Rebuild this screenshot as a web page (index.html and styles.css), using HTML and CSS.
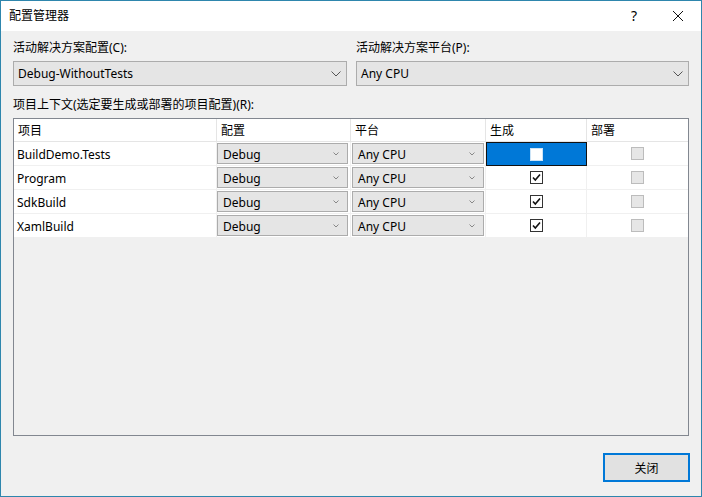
FILE: index.html
```html
<!DOCTYPE html>
<html lang="zh-CN">
<head>
<meta charset="utf-8">
<title>配置管理器</title>
<link rel="stylesheet" href="styles.css">
</head>
<body>
<div class="window">
  <div class="titlebar">
    <span class="title">配置管理器</span>
    <div class="tb-buttons">
      <span class="tb-help">?</span>
      <span class="tb-close"><svg width="12" height="12" viewBox="0 0 12 12"><path d="M1 1 L11 11 M11 1 L1 11" stroke="#111" stroke-width="1" fill="none"/></svg></span>
    </div>
  </div>
  <div class="content">
    <div class="top-fields">
      <div class="field">
        <div class="label">活动解决方案配置(C):</div>
        <div class="combo combo-big"><span>Debug-WithoutTests</span><svg class="chev" width="10" height="6" viewBox="0 0 10 6"><path d="M0.5 0.5 L5 5 L9.5 0.5" stroke="#555" stroke-width="1" fill="none"/></svg></div>
      </div>
      <div class="field">
        <div class="label">活动解决方案平台(P):</div>
        <div class="combo combo-big"><span>Any CPU</span><svg class="chev" width="10" height="6" viewBox="0 0 10 6"><path d="M0.5 0.5 L5 5 L9.5 0.5" stroke="#555" stroke-width="1" fill="none"/></svg></div>
      </div>
    </div>
    <div class="label ctx-label">项目上下文(选定要生成或部署的项目配置)(R):</div>
    <div class="grid-box">
      <div class="grid">
        <div class="hcell">项目</div>
        <div class="hcell">配置</div>
        <div class="hcell">平台</div>
        <div class="hcell">生成</div>
        <div class="hcell">部署</div>

        <div class="cell name">BuildDemo.Tests</div>
        <div class="cell cfg"><div class="combo combo-sm"><span>Debug</span><svg class="chev-sm" width="6" height="4" viewBox="0 0 6 4"><path d="M0.5 0.5 L3 3 L5.5 0.5" stroke="#888" stroke-width="1" fill="none"/></svg></div></div>
        <div class="cell plat"><div class="combo combo-sm"><span>Any CPU</span><svg class="chev-sm" width="6" height="4" viewBox="0 0 6 4"><path d="M0.5 0.5 L3 3 L5.5 0.5" stroke="#888" stroke-width="1" fill="none"/></svg></div></div>
        <div class="cell chk selected"><span class="box box-sel"></span></div>
        <div class="cell chk"><span class="box box-dis"></span></div>

        <div class="cell name">Program</div>
        <div class="cell cfg"><div class="combo combo-sm"><span>Debug</span><svg class="chev-sm" width="6" height="4" viewBox="0 0 6 4"><path d="M0.5 0.5 L3 3 L5.5 0.5" stroke="#888" stroke-width="1" fill="none"/></svg></div></div>
        <div class="cell plat"><div class="combo combo-sm"><span>Any CPU</span><svg class="chev-sm" width="6" height="4" viewBox="0 0 6 4"><path d="M0.5 0.5 L3 3 L5.5 0.5" stroke="#888" stroke-width="1" fill="none"/></svg></div></div>
        <div class="cell chk"><span class="box"><svg width="11" height="11" viewBox="0 0 11 11"><path d="M2 5.5 L4.3 8 L9 2.5" stroke="#111" stroke-width="1.6" fill="none"/></svg></span></div>
        <div class="cell chk"><span class="box box-dis"></span></div>

        <div class="cell name">SdkBuild</div>
        <div class="cell cfg"><div class="combo combo-sm"><span>Debug</span><svg class="chev-sm" width="6" height="4" viewBox="0 0 6 4"><path d="M0.5 0.5 L3 3 L5.5 0.5" stroke="#888" stroke-width="1" fill="none"/></svg></div></div>
        <div class="cell plat"><div class="combo combo-sm"><span>Any CPU</span><svg class="chev-sm" width="6" height="4" viewBox="0 0 6 4"><path d="M0.5 0.5 L3 3 L5.5 0.5" stroke="#888" stroke-width="1" fill="none"/></svg></div></div>
        <div class="cell chk"><span class="box"><svg width="11" height="11" viewBox="0 0 11 11"><path d="M2 5.5 L4.3 8 L9 2.5" stroke="#111" stroke-width="1.6" fill="none"/></svg></span></div>
        <div class="cell chk"><span class="box box-dis"></span></div>

        <div class="cell name">XamlBuild</div>
        <div class="cell cfg"><div class="combo combo-sm"><span>Debug</span><svg class="chev-sm" width="6" height="4" viewBox="0 0 6 4"><path d="M0.5 0.5 L3 3 L5.5 0.5" stroke="#888" stroke-width="1" fill="none"/></svg></div></div>
        <div class="cell plat"><div class="combo combo-sm"><span>Any CPU</span><svg class="chev-sm" width="6" height="4" viewBox="0 0 6 4"><path d="M0.5 0.5 L3 3 L5.5 0.5" stroke="#888" stroke-width="1" fill="none"/></svg></div></div>
        <div class="cell chk"><span class="box"><svg width="11" height="11" viewBox="0 0 11 11"><path d="M2 5.5 L4.3 8 L9 2.5" stroke="#111" stroke-width="1.6" fill="none"/></svg></span></div>
        <div class="cell chk"><span class="box box-dis"></span></div>
      </div>
    </div>
    <div class="footer">
      <button class="btn">关闭</button>
    </div>
  </div>
</div>
</body>
</html>
```

FILE: styles.css
```css
* { box-sizing: border-box; }
html, body { margin: 0; padding: 0; }
body {
  width: 702px;
  height: 497px;
  font-family: "Noto Sans", "Noto Sans CJK SC", sans-serif;
  font-size: 12px;
  color: #000;
  background: #f0f0f0;
}
.window {
  width: 702px;
  height: 497px;
  border: 1px solid #2e86ad;
  display: flex;
  flex-direction: column;
  background: #f0f0f0;
}
.titlebar {
  height: 30px;
  background: #fff;
  display: flex;
  align-items: center;
  justify-content: space-between;
  padding-left: 8px;
  flex: none;
}
.title { font-size: 12px; line-height: 16px; }
.tb-buttons { display: flex; align-items: center; height: 30px; }
.tb-help { width: 46px; text-align: center; font-size: 14px; line-height: 30px; padding-left: 4px; }
.tb-close { width: 46px; height: 30px; display: flex; align-items: center; justify-content: center; }
.content {
  flex: 1;
  display: flex;
  flex-direction: column;
  padding: 8px 12px 14px 12px;
}
.top-fields {
  display: grid;
  grid-template-columns: 334px 333px;
  column-gap: 9px;
}
.field { display: flex; flex-direction: column; }
.label { height: 20px; line-height: 18px; white-space: nowrap; }
.combo {
  display: flex;
  align-items: center;
  justify-content: space-between;
  background: #e5e5e5;
  border: 1px solid #acacac;
}
.combo-big {
  height: 25px;
  margin-top: 2px;
  padding: 0 5px 0 4px;
}
.combo-big span { line-height: 20px; }
.ctx-label { margin-top: 10px; }
.grid-box {
  margin-top: 2px;
  flex: 1;
  border: 1px solid #828790;
  background: #f0f0f0;
}
.grid {
  display: grid;
  grid-template-columns: 203px 134px 135px 101px 101px;
  grid-auto-rows: 24px;
  grid-template-rows: 23px;
}
.hcell {
  background: #fff;
  border-right: 1px solid #e5e5e5;
  border-bottom: 1px solid #e5e5e5;
  padding-left: 4px;
  line-height: 23px;
}
.hcell:nth-child(5) { border-right: none; }
.cell {
  background: #fff;
  border-right: 1px solid #f0f0f0;
  border-bottom: 1px solid #f0f0f0;
  display: flex;
  align-items: center;
}
.cell:nth-child(5n) { border-right: none; }
.name { padding-left: 3px; padding-top: 2px; }
.cfg { padding: 1px 2px 1px 0; }
.plat { padding: 1px 1px 1px 1px; }
.combo-sm {
  width: 100%;
  height: 21px;
  padding: 0 8px 0 5px;
}
.combo-sm span { line-height: 18px; padding-top: 2px; }
.chk { justify-content: center; }
.selected {
  background: #0078d7;
  border: 1px solid #111;
}
.box {
  width: 13px;
  height: 13px;
  border: 1px solid #333;
  background: #fff;
  display: flex;
  align-items: center;
  justify-content: center;
}
.box-sel { border-color: #cce4f7; background: #fff; }
.box-dis { border-color: #bcbcbc; background: #e6e6e6; }
.footer {
  display: flex;
  justify-content: flex-end;
  margin-top: 17px;
}
.btn {
  width: 87px;
  height: 29px;
  border: 2px solid #0078d7;
  background: #e1e1e1;
  font-family: "Noto Sans CJK SC", sans-serif;
  font-size: 12px;
  color: #000;
  padding: 0;
  margin-right: -1px;
}
```
